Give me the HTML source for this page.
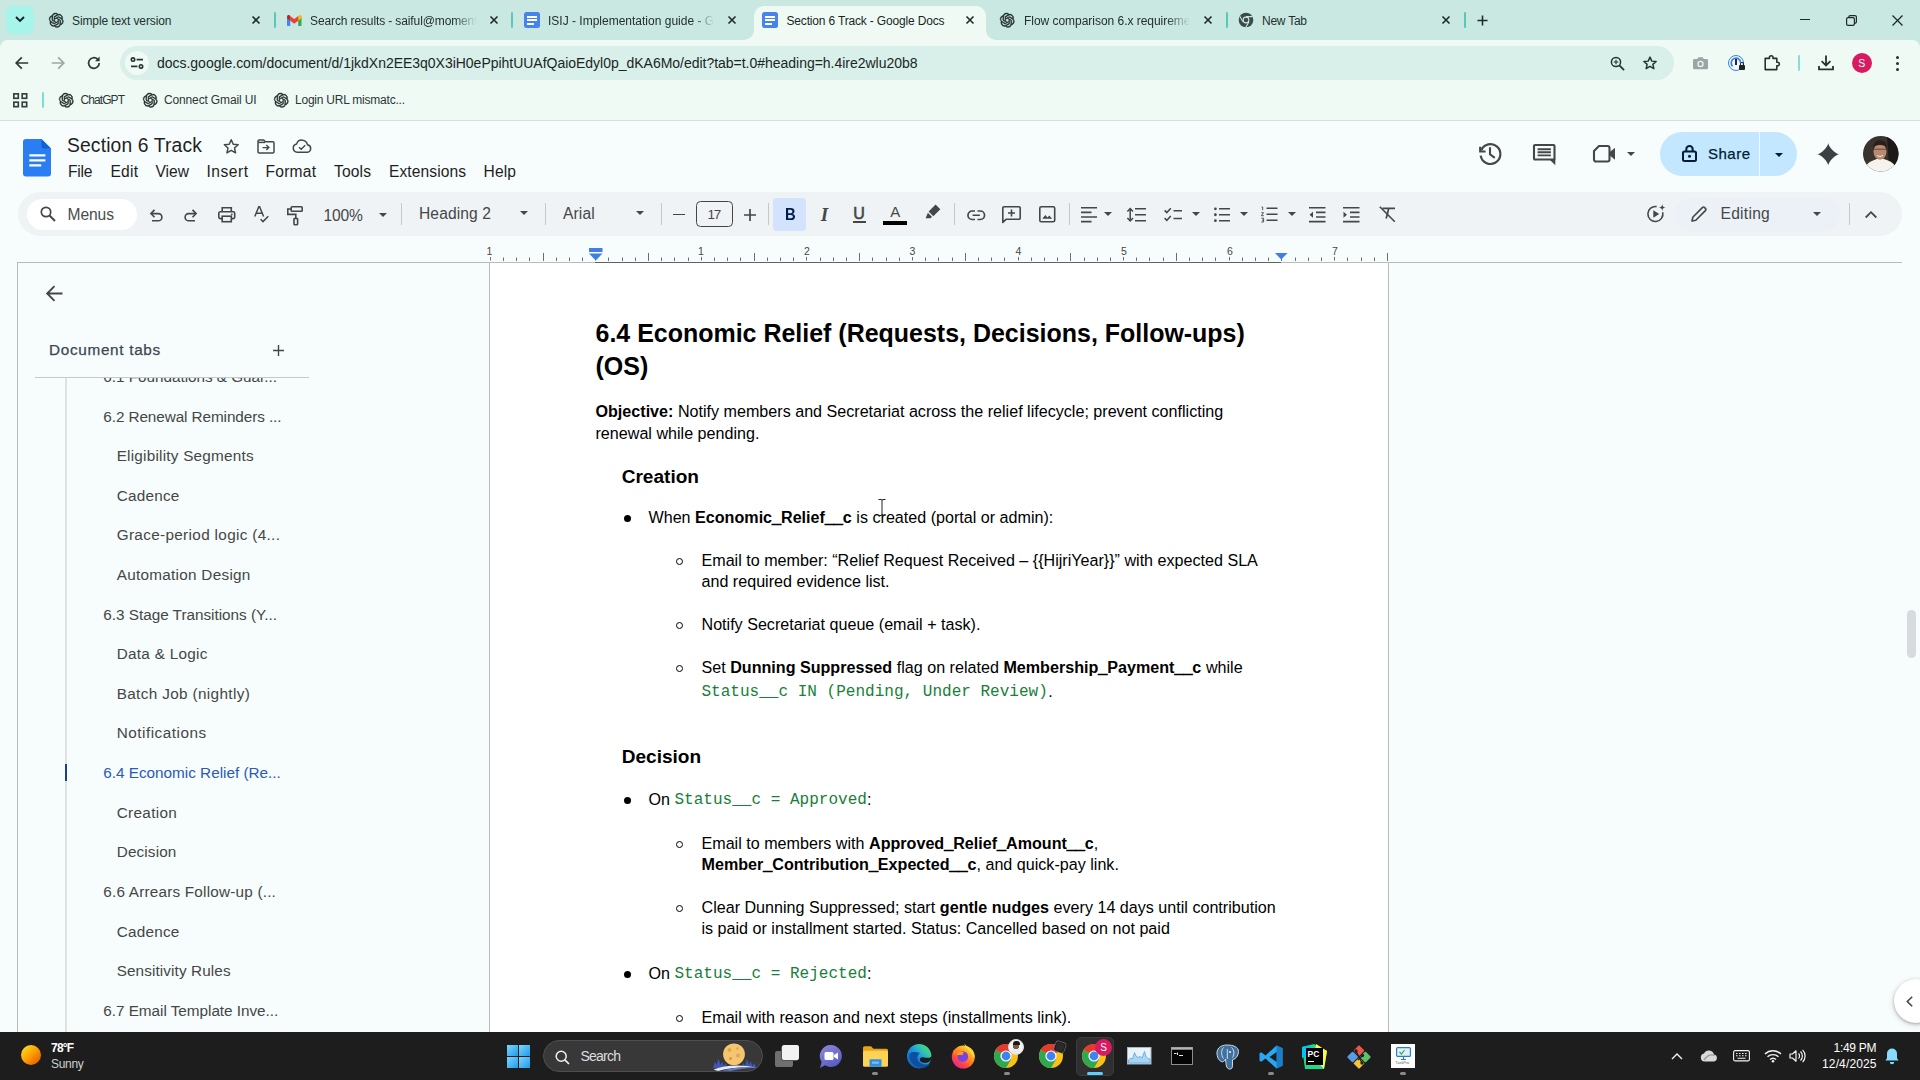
<!DOCTYPE html>
<html lang="en"><head><meta charset="utf-8"><title>Section 6 Track - Google Docs</title>
<style>
*{box-sizing:border-box;margin:0;padding:0}
html,body{width:1920px;height:1080px;overflow:hidden;background:#f7fcfc;font-family:"Liberation Sans",sans-serif}
.t{position:absolute;white-space:pre;}
.a{position:absolute}
svg{position:absolute;overflow:visible}
</style></head>
<body>
<div class="a" style="left:0;top:0;width:1920px;height:50px;background:#c9e8e2"></div>
<div class="a" style="left:0;top:40px;width:1920px;height:80px;background:#f0faf5;border-radius:8px 8px 0 0"></div>
<div class="a" style="left:0;top:120px;width:1920px;height:1px;background:#d3e2de"></div>
<div class="a" style="left:6px;top:6px;width:28px;height:28px;border-radius:8px;background:#a7f4ea"></div>
<svg style="left:15px;top:16px" width="10" height="7" viewBox="0 0 10 7"><path d="M1 1l4 4 4-4" stroke="#10201d" stroke-width="1.8" fill="none"/></svg>
<div class="a" style="left:754px;top:6px;width:232px;height:34px;background:#f0faf5;border-radius:10px 10px 0 0"></div>
<svg style="left:744px;top:30px" width="10" height="10" viewBox="0 0 10 10"><path d="M10 0V10H0A10 10 0 0 0 10 0z" fill="#f0faf5"/></svg>
<svg style="left:986px;top:30px" width="10" height="10" viewBox="0 0 10 10"><path d="M0 0V10H10A10 10 0 0 1 0 0z" fill="#f0faf5"/></svg>
<svg style="left:48.75px;top:12.75px" width="14.5" height="14.5" viewBox="0 0 24 24"><path fill="#1f2a28" stroke="#1f2a28" stroke-width="0.700" d="M22.2819 9.8211a5.9847 5.9847 0 0 0-.5157-4.9108 6.0462 6.0462 0 0 0-6.5098-2.9A6.0651 6.0651 0 0 0 4.9807 4.1818a5.9847 5.9847 0 0 0-3.9977 2.9 6.0462 6.0462 0 0 0 .7427 7.0966 5.98 5.98 0 0 0 .511 4.9107 6.051 6.051 0 0 0 6.5146 2.9001A5.9847 5.9847 0 0 0 13.2599 24a6.0557 6.0557 0 0 0 5.7718-4.2058 5.9894 5.9894 0 0 0 3.9977-2.9001 6.0557 6.0557 0 0 0-.7475-7.0729zm-9.022 12.6081a4.4755 4.4755 0 0 1-2.8764-1.0408l.1419-.0804 4.7783-2.7582a.7948.7948 0 0 0 .3927-.6813v-6.7369l2.02 1.1686a.071.071 0 0 1 .038.052v5.5826a4.504 4.504 0 0 1-4.4945 4.4944zm-9.6607-4.1254a4.4708 4.4708 0 0 1-.5346-3.0137l.142.0852 4.783 2.7582a.7712.7712 0 0 0 .7806 0l5.8428-3.3685v2.3324a.0804.0804 0 0 1-.0332.0615L9.74 19.9502a4.4992 4.4992 0 0 1-6.1408-1.6464zM2.3408 7.8956a4.485 4.485 0 0 1 2.3655-1.9728V11.6a.7664.7664 0 0 0 .3879.6765l5.8144 3.3543-2.0201 1.1685a.0757.0757 0 0 1-.071 0l-4.8303-2.7865A4.504 4.504 0 0 1 2.3408 7.872zm16.5963 3.8558L13.1038 8.364 15.1192 7.2a.0757.0757 0 0 1 .071 0l4.8303 2.7913a4.4944 4.4944 0 0 1-.6765 8.1042v-5.6772a.79.79 0 0 0-.407-.667zm2.0107-3.0231l-.142-.0852-4.7735-2.7818a.7759.7759 0 0 0-.7854 0L9.409 9.2297V6.8974a.0662.0662 0 0 1 .0284-.0615l4.8303-2.7866a4.4992 4.4992 0 0 1 6.6802 4.66zM8.3065 12.863l-2.02-1.1638a.0804.0804 0 0 1-.038-.0567V6.0742a4.4992 4.4992 0 0 1 7.3757-3.4537l-.142.0805L8.704 5.459a.7948.7948 0 0 0-.3927.6813zm1.0976-2.3654l2.602-1.4998 2.6069 1.4998v2.9994l-2.5974 1.4997-2.6067-1.4997Z"/></svg>
<span class="t" style="left:72.00px;top:13.24px;font-size:12px;line-height:16px;color:#23302e;letter-spacing:-0.104px;">Simple text version</span>
<svg style="left:286.8px;top:14.7px" width="14.5" height="10.9" viewBox="0 0 16 12">
<path d="M0 1.6V11a1 1 0 0 0 1 1h2.6V4.6z" fill="#4285f4"/><path d="M16 1.6V11a1 1 0 0 1-1 1h-2.6V4.6z" fill="#34a853"/>
<path d="M12.4 1.2v5.2L16 3.7V1.6C16 .1 14.3-.6 13.2.3z" fill="#fbbc04"/>
<path d="M3.6 6.4V1.2L8 4.5l4.4-3.3v5.2L8 9.7z" fill="#ea4335"/>
<path d="M0 1.6v2.1l3.6 2.7V1.2L2.8.3C1.7-.6 0 .1 0 1.6z" fill="#c5221f"/></svg>
<span class="t" style="left:310.00px;top:13.24px;font-size:12px;line-height:16px;color:#23302e;letter-spacing:-0.117px;-webkit-mask-image:linear-gradient(90deg,#000 86%,transparent 100%);">Search results - saiful@moment</span>
<div class="a" style="left:523.8px;top:12px;width:16px;height:16px;border-radius:2.5px;background:#4683ea"></div><div class="a" style="left:526.8px;top:15.5px;width:10px;height:2px;background:#fff"></div><div class="a" style="left:526.8px;top:19px;width:10px;height:2px;background:#fff"></div><div class="a" style="left:526.8px;top:22.5px;width:7px;height:2px;background:#fff"></div>
<span class="t" style="left:548.00px;top:13.24px;font-size:12px;line-height:16px;color:#23302e;-webkit-mask-image:linear-gradient(90deg,#000 88%,transparent 100%);">ISIJ - Implementation guide - G</span>
<div class="a" style="left:762px;top:12px;width:16px;height:16px;border-radius:2.5px;background:#4683ea"></div><div class="a" style="left:765px;top:15.5px;width:10px;height:2px;background:#fff"></div><div class="a" style="left:765px;top:19px;width:10px;height:2px;background:#fff"></div><div class="a" style="left:765px;top:22.5px;width:7px;height:2px;background:#fff"></div>
<span class="t" style="left:786.50px;top:13.24px;font-size:12px;line-height:16px;color:#1b2624;letter-spacing:-0.169px;">Section 6 Track - Google Docs</span>
<svg style="left:1000.25px;top:12.75px" width="14.5" height="14.5" viewBox="0 0 24 24"><path fill="#1f2a28" stroke="#1f2a28" stroke-width="0.700" d="M22.2819 9.8211a5.9847 5.9847 0 0 0-.5157-4.9108 6.0462 6.0462 0 0 0-6.5098-2.9A6.0651 6.0651 0 0 0 4.9807 4.1818a5.9847 5.9847 0 0 0-3.9977 2.9 6.0462 6.0462 0 0 0 .7427 7.0966 5.98 5.98 0 0 0 .511 4.9107 6.051 6.051 0 0 0 6.5146 2.9001A5.9847 5.9847 0 0 0 13.2599 24a6.0557 6.0557 0 0 0 5.7718-4.2058 5.9894 5.9894 0 0 0 3.9977-2.9001 6.0557 6.0557 0 0 0-.7475-7.0729zm-9.022 12.6081a4.4755 4.4755 0 0 1-2.8764-1.0408l.1419-.0804 4.7783-2.7582a.7948.7948 0 0 0 .3927-.6813v-6.7369l2.02 1.1686a.071.071 0 0 1 .038.052v5.5826a4.504 4.504 0 0 1-4.4945 4.4944zm-9.6607-4.1254a4.4708 4.4708 0 0 1-.5346-3.0137l.142.0852 4.783 2.7582a.7712.7712 0 0 0 .7806 0l5.8428-3.3685v2.3324a.0804.0804 0 0 1-.0332.0615L9.74 19.9502a4.4992 4.4992 0 0 1-6.1408-1.6464zM2.3408 7.8956a4.485 4.485 0 0 1 2.3655-1.9728V11.6a.7664.7664 0 0 0 .3879.6765l5.8144 3.3543-2.0201 1.1685a.0757.0757 0 0 1-.071 0l-4.8303-2.7865A4.504 4.504 0 0 1 2.3408 7.872zm16.5963 3.8558L13.1038 8.364 15.1192 7.2a.0757.0757 0 0 1 .071 0l4.8303 2.7913a4.4944 4.4944 0 0 1-.6765 8.1042v-5.6772a.79.79 0 0 0-.407-.667zm2.0107-3.0231l-.142-.0852-4.7735-2.7818a.7759.7759 0 0 0-.7854 0L9.409 9.2297V6.8974a.0662.0662 0 0 1 .0284-.0615l4.8303-2.7866a4.4992 4.4992 0 0 1 6.6802 4.66zM8.3065 12.863l-2.02-1.1638a.0804.0804 0 0 1-.038-.0567V6.0742a4.4992 4.4992 0 0 1 7.3757-3.4537l-.142.0805L8.704 5.459a.7948.7948 0 0 0-.3927.6813zm1.0976-2.3654l2.602-1.4998 2.6069 1.4998v2.9994l-2.5974 1.4997-2.6067-1.4997Z"/></svg>
<span class="t" style="left:1024.00px;top:13.24px;font-size:12px;line-height:16px;color:#23302e;letter-spacing:-0.032px;-webkit-mask-image:linear-gradient(90deg,#000 86%,transparent 100%);">Flow comparison 6.x requireme</span>
<svg style="left:1237.5px;top:12px" width="16" height="16" viewBox="0 0 16 16"><circle cx="8" cy="8" r="7.3" fill="#3c4a48"/><circle cx="8" cy="8" r="3.4" fill="#c9e8e2"/><circle cx="8" cy="8" r="2.3" fill="#3c4a48"/><path d="M8 4.6H14.6M5 9.7L1.8 4.2M11 9.7L7.8 15.2" stroke="#c9e8e2" stroke-width="1.1"/></svg>
<span class="t" style="left:1262.00px;top:13.24px;font-size:12px;line-height:16px;color:#23302e;letter-spacing:-0.245px;">New Tab</span>
<svg style="left:252px;top:16px" width="8" height="8" viewBox="0 0 8 8"><path d="M0.5 0.5L7.5 7.5M7.5 0.5L0.5 7.5" stroke="#1f2a28" stroke-width="1.6" fill="none"/></svg>
<svg style="left:490px;top:16px" width="8" height="8" viewBox="0 0 8 8"><path d="M0.5 0.5L7.5 7.5M7.5 0.5L0.5 7.5" stroke="#1f2a28" stroke-width="1.6" fill="none"/></svg>
<svg style="left:728px;top:16px" width="8" height="8" viewBox="0 0 8 8"><path d="M0.5 0.5L7.5 7.5M7.5 0.5L0.5 7.5" stroke="#1f2a28" stroke-width="1.6" fill="none"/></svg>
<svg style="left:966px;top:16px" width="8" height="8" viewBox="0 0 8 8"><path d="M0.5 0.5L7.5 7.5M7.5 0.5L0.5 7.5" stroke="#1f2a28" stroke-width="1.6" fill="none"/></svg>
<svg style="left:1204px;top:16px" width="8" height="8" viewBox="0 0 8 8"><path d="M0.5 0.5L7.5 7.5M7.5 0.5L0.5 7.5" stroke="#1f2a28" stroke-width="1.6" fill="none"/></svg>
<svg style="left:1442px;top:16px" width="8" height="8" viewBox="0 0 8 8"><path d="M0.5 0.5L7.5 7.5M7.5 0.5L0.5 7.5" stroke="#1f2a28" stroke-width="1.6" fill="none"/></svg>
<div class="a" style="left:274px;top:12px;width:2px;height:16px;background:#58c9b9;border-radius:1px"></div>
<div class="a" style="left:511px;top:12px;width:2px;height:16px;background:#58c9b9;border-radius:1px"></div>
<div class="a" style="left:1226px;top:12px;width:2px;height:16px;background:#58c9b9;border-radius:1px"></div>
<div class="a" style="left:1464px;top:12px;width:2px;height:16px;background:#58c9b9;border-radius:1px"></div>
<svg style="left:1476.500px;top:14.500px" width="11" height="11" viewBox="0 0 12 12"><path d="M6 0.5v11M0.5 6h11" stroke="#1f2a28" stroke-width="1.7"/></svg>
<div class="a" style="left:1800px;top:18.800px;width:10px;height:1.300px;background:#1f2a28"></div>
<svg style="left:1846px;top:15px" width="11" height="11" viewBox="0 0 11 11"><rect x="0.6" y="2.6" width="7.8" height="7.8" rx="1.4" fill="none" stroke="#1f2a28" stroke-width="1.2"/><path d="M2.8 2.4V2A1.4 1.4 0 0 1 4.2 0.6H9A1.4 1.4 0 0 1 10.4 2V6.8A1.4 1.4 0 0 1 9 8.2H8.6" fill="none" stroke="#1f2a28" stroke-width="1.2"/></svg>
<svg style="left:1891.5px;top:14.5px" width="11.0" height="11.0" viewBox="0 0 11.0 11.0"><path d="M0.5 0.5L10.5 10.5M10.5 0.5L0.5 10.5" stroke="#1f2a28" stroke-width="1.3" fill="none"/></svg>
<svg style="left:15px;top:56px" width="14" height="14" viewBox="0 0 14 14"><path d="M13.2 7H1.6M6.8 1.4L1.2 7l5.6 5.6" stroke="#2c3836" stroke-width="1.7" fill="none"/></svg>
<svg style="left:51px;top:56px" width="14" height="14" viewBox="0 0 14 14"><path d="M0.8 7H12.4M7.2 1.4L12.8 7 7.2 12.6" stroke="#9aa9a6" stroke-width="1.7" fill="none"/></svg>
<svg style="left:87px;top:56px" width="14" height="14" viewBox="0 0 14 14"><path d="M12.2 7A5.3 5.3 0 1 1 10.6 3.2" stroke="#2c3836" stroke-width="1.7" fill="none"/><path d="M12.6 0.6V5.2H8z" fill="#2c3836"/></svg>
<div class="a" style="left:120px;top:46px;width:1554px;height:34px;border-radius:17px;background:#d9efe9"></div>
<div class="a" style="left:125px;top:51px;width:24px;height:24px;border-radius:12px;background:#f0faf5"></div>
<svg style="left:130px;top:57px" width="14" height="12" viewBox="0 0 14 12"><circle cx="3" cy="2.6" r="1.7" fill="none" stroke="#243230" stroke-width="1.6"/><path d="M6.6 2.6H13" stroke="#243230" stroke-width="1.7"/><circle cx="11" cy="9.4" r="1.7" fill="none" stroke="#243230" stroke-width="1.6"/><path d="M1 9.4H7.4" stroke="#243230" stroke-width="1.7"/></svg>
<span class="t" style="left:157.00px;top:54.15px;font-size:14px;line-height:18px;color:#1b2624;letter-spacing:-0.021px;">docs.google.com/document/d/1jkdXn2EE3q0X3iH0ePpihtUUAfQaioEdyl0p_dKA6Mo/edit?tab=t.0#heading=h.4ire2wlu20b8</span>
<svg style="left:1610.300px;top:55.500px" width="15" height="15" viewBox="0 0 16 16"><circle cx="6.4" cy="6.4" r="4.9" fill="none" stroke="#243230" stroke-width="1.6"/><path d="M10 10l5 5" stroke="#243230" stroke-width="1.9"/><path d="M4 6.4h4.8M6.4 4v4.8" stroke="#243230" stroke-width="1.2"/></svg>
<svg style="left:1642px;top:55px" width="16" height="16" viewBox="0 0 24 24"><path d="M12 3.2l2.7 6 6.5.6-4.9 4.3 1.5 6.4L12 17.1l-5.8 3.4 1.5-6.4-4.9-4.3 6.5-.6z" fill="none" stroke="#243230" stroke-width="2.2" stroke-linejoin="round"/></svg>
<svg style="left:1692.500px;top:55.800px" width="15" height="13.500" viewBox="0 0 16 14"><path d="M1.500 3h3l1.200-2h4.600l1.200 2h3A1.500 1.500 0 0 1 16 4.500v8A1.500 1.500 0 0 1 14.500 14h-13A1.500 1.500 0 0 1 0 12.500v-8A1.500 1.500 0 0 1 1.500 3z" fill="#9ba5a3"/><circle cx="8" cy="8.300" r="3.400" fill="#eef4f2"/><circle cx="8" cy="8.300" r="2" fill="#9ba5a3"/></svg>
<div class="a" style="left:1727.500px;top:54.500px;width:16px;height:16px;border-radius:8px;border:1.400px solid #3c83e3;background:#f4f8fd"></div><svg style="left:1729.500px;top:56.500px" width="12" height="12" viewBox="0 0 12 12"><path d="M2.600 9.400A4.800 4.800 0 1 1 10.800 6" fill="none" stroke="#3c83e3" stroke-width="1.700"/></svg><div class="a" style="left:1734.600px;top:58.800px;width:2px;height:6.400px;background:#1f2937"></div><div class="a" style="left:1738.500px;top:65px;width:6.300px;height:5.300px;border-radius:1px;background:#1c2422"></div><div class="a" style="left:1739.700px;top:62.300px;width:3.900px;height:4px;border-radius:2px 2px 0 0;border:1px solid #1c2422;border-bottom:0"></div>
<svg style="left:1764px;top:54px" width="17" height="17" viewBox="0 0 17 17"><path d="M1.2 4.400h4.200v-.8a1.800 1.800 0 0 1 3.600 0v.8h3.800v3.800h.8a1.800 1.800 0 0 1 0 3.600h-.8v3.800H1.200z" fill="none" stroke="#243230" stroke-width="1.600" stroke-linejoin="round"/></svg>
<div class="a" style="left:1797.5px;top:55px;width:2px;height:16px;background:#84e0d6;border-radius:1px"></div>
<svg style="left:1818px;top:55px" width="16" height="16" viewBox="0 0 16 16"><path d="M8 0.500v9.500M3.600 6.200L8 10.400l4.400-4.200" stroke="#243230" stroke-width="1.800" fill="none"/><path d="M1 11v3.400h14V11" stroke="#243230" stroke-width="1.800" fill="none"/></svg>
<div class="a" style="left:1852px;top:53px;width:20px;height:20px;border-radius:10px;background:#d81b60"></div>
<span class="t" style="left:1858.30px;top:56.36px;font-size:10.5px;line-height:14px;color:#fff;">S</span>
<div class="a" style="left:1896px;top:55.5px;width:3px;height:3px;border-radius:2px;background:#243230"></div>
<div class="a" style="left:1896px;top:61.5px;width:3px;height:3px;border-radius:2px;background:#243230"></div>
<div class="a" style="left:1896px;top:67.5px;width:3px;height:3px;border-radius:2px;background:#243230"></div>
<svg style="left:12.800px;top:92.800px" width="14.500" height="14.500" viewBox="0 0 13 13"><g fill="none" stroke="#34403e" stroke-width="1.500"><rect x="0.750" y="0.750" width="4" height="4"/><rect x="8.250" y="0.750" width="4" height="4"/><rect x="0.750" y="8.250" width="4" height="4"/><rect x="8.250" y="8.250" width="4" height="4"/></g></svg>
<div class="a" style="left:42px;top:92px;width:2px;height:16px;background:#7adfd2;border-radius:1px"></div>
<svg style="left:58.75px;top:92.75px" width="14.5" height="14.5" viewBox="0 0 24 24"><path fill="#1f2a28" stroke="#1f2a28" stroke-width="0.700" d="M22.2819 9.8211a5.9847 5.9847 0 0 0-.5157-4.9108 6.0462 6.0462 0 0 0-6.5098-2.9A6.0651 6.0651 0 0 0 4.9807 4.1818a5.9847 5.9847 0 0 0-3.9977 2.9 6.0462 6.0462 0 0 0 .7427 7.0966 5.98 5.98 0 0 0 .511 4.9107 6.051 6.051 0 0 0 6.5146 2.9001A5.9847 5.9847 0 0 0 13.2599 24a6.0557 6.0557 0 0 0 5.7718-4.2058 5.9894 5.9894 0 0 0 3.9977-2.9001 6.0557 6.0557 0 0 0-.7475-7.0729zm-9.022 12.6081a4.4755 4.4755 0 0 1-2.8764-1.0408l.1419-.0804 4.7783-2.7582a.7948.7948 0 0 0 .3927-.6813v-6.7369l2.02 1.1686a.071.071 0 0 1 .038.052v5.5826a4.504 4.504 0 0 1-4.4945 4.4944zm-9.6607-4.1254a4.4708 4.4708 0 0 1-.5346-3.0137l.142.0852 4.783 2.7582a.7712.7712 0 0 0 .7806 0l5.8428-3.3685v2.3324a.0804.0804 0 0 1-.0332.0615L9.74 19.9502a4.4992 4.4992 0 0 1-6.1408-1.6464zM2.3408 7.8956a4.485 4.485 0 0 1 2.3655-1.9728V11.6a.7664.7664 0 0 0 .3879.6765l5.8144 3.3543-2.0201 1.1685a.0757.0757 0 0 1-.071 0l-4.8303-2.7865A4.504 4.504 0 0 1 2.3408 7.872zm16.5963 3.8558L13.1038 8.364 15.1192 7.2a.0757.0757 0 0 1 .071 0l4.8303 2.7913a4.4944 4.4944 0 0 1-.6765 8.1042v-5.6772a.79.79 0 0 0-.407-.667zm2.0107-3.0231l-.142-.0852-4.7735-2.7818a.7759.7759 0 0 0-.7854 0L9.409 9.2297V6.8974a.0662.0662 0 0 1 .0284-.0615l4.8303-2.7866a4.4992 4.4992 0 0 1 6.6802 4.66zM8.3065 12.863l-2.02-1.1638a.0804.0804 0 0 1-.038-.0567V6.0742a4.4992 4.4992 0 0 1 7.3757-3.4537l-.142.0805L8.704 5.459a.7948.7948 0 0 0-.3927.6813zm1.0976-2.3654l2.602-1.4998 2.6069 1.4998v2.9994l-2.5974 1.4997-2.6067-1.4997Z"/></svg>
<span class="t" style="left:80.50px;top:92.14px;font-size:12px;line-height:16px;color:#2b3735;letter-spacing:-0.919px;">ChatGPT</span>
<svg style="left:142.75px;top:92.75px" width="14.5" height="14.5" viewBox="0 0 24 24"><path fill="#1f2a28" stroke="#1f2a28" stroke-width="0.700" d="M22.2819 9.8211a5.9847 5.9847 0 0 0-.5157-4.9108 6.0462 6.0462 0 0 0-6.5098-2.9A6.0651 6.0651 0 0 0 4.9807 4.1818a5.9847 5.9847 0 0 0-3.9977 2.9 6.0462 6.0462 0 0 0 .7427 7.0966 5.98 5.98 0 0 0 .511 4.9107 6.051 6.051 0 0 0 6.5146 2.9001A5.9847 5.9847 0 0 0 13.2599 24a6.0557 6.0557 0 0 0 5.7718-4.2058 5.9894 5.9894 0 0 0 3.9977-2.9001 6.0557 6.0557 0 0 0-.7475-7.0729zm-9.022 12.6081a4.4755 4.4755 0 0 1-2.8764-1.0408l.1419-.0804 4.7783-2.7582a.7948.7948 0 0 0 .3927-.6813v-6.7369l2.02 1.1686a.071.071 0 0 1 .038.052v5.5826a4.504 4.504 0 0 1-4.4945 4.4944zm-9.6607-4.1254a4.4708 4.4708 0 0 1-.5346-3.0137l.142.0852 4.783 2.7582a.7712.7712 0 0 0 .7806 0l5.8428-3.3685v2.3324a.0804.0804 0 0 1-.0332.0615L9.74 19.9502a4.4992 4.4992 0 0 1-6.1408-1.6464zM2.3408 7.8956a4.485 4.485 0 0 1 2.3655-1.9728V11.6a.7664.7664 0 0 0 .3879.6765l5.8144 3.3543-2.0201 1.1685a.0757.0757 0 0 1-.071 0l-4.8303-2.7865A4.504 4.504 0 0 1 2.3408 7.872zm16.5963 3.8558L13.1038 8.364 15.1192 7.2a.0757.0757 0 0 1 .071 0l4.8303 2.7913a4.4944 4.4944 0 0 1-.6765 8.1042v-5.6772a.79.79 0 0 0-.407-.667zm2.0107-3.0231l-.142-.0852-4.7735-2.7818a.7759.7759 0 0 0-.7854 0L9.409 9.2297V6.8974a.0662.0662 0 0 1 .0284-.0615l4.8303-2.7866a4.4992 4.4992 0 0 1 6.6802 4.66zM8.3065 12.863l-2.02-1.1638a.0804.0804 0 0 1-.038-.0567V6.0742a4.4992 4.4992 0 0 1 7.3757-3.4537l-.142.0805L8.704 5.459a.7948.7948 0 0 0-.3927.6813zm1.0976-2.3654l2.602-1.4998 2.6069 1.4998v2.9994l-2.5974 1.4997-2.6067-1.4997Z"/></svg>
<span class="t" style="left:164.00px;top:92.14px;font-size:12px;line-height:16px;color:#2b3735;letter-spacing:-0.147px;">Connect Gmail UI</span>
<svg style="left:273.75px;top:92.75px" width="14.5" height="14.5" viewBox="0 0 24 24"><path fill="#1f2a28" stroke="#1f2a28" stroke-width="0.700" d="M22.2819 9.8211a5.9847 5.9847 0 0 0-.5157-4.9108 6.0462 6.0462 0 0 0-6.5098-2.9A6.0651 6.0651 0 0 0 4.9807 4.1818a5.9847 5.9847 0 0 0-3.9977 2.9 6.0462 6.0462 0 0 0 .7427 7.0966 5.98 5.98 0 0 0 .511 4.9107 6.051 6.051 0 0 0 6.5146 2.9001A5.9847 5.9847 0 0 0 13.2599 24a6.0557 6.0557 0 0 0 5.7718-4.2058 5.9894 5.9894 0 0 0 3.9977-2.9001 6.0557 6.0557 0 0 0-.7475-7.0729zm-9.022 12.6081a4.4755 4.4755 0 0 1-2.8764-1.0408l.1419-.0804 4.7783-2.7582a.7948.7948 0 0 0 .3927-.6813v-6.7369l2.02 1.1686a.071.071 0 0 1 .038.052v5.5826a4.504 4.504 0 0 1-4.4945 4.4944zm-9.6607-4.1254a4.4708 4.4708 0 0 1-.5346-3.0137l.142.0852 4.783 2.7582a.7712.7712 0 0 0 .7806 0l5.8428-3.3685v2.3324a.0804.0804 0 0 1-.0332.0615L9.74 19.9502a4.4992 4.4992 0 0 1-6.1408-1.6464zM2.3408 7.8956a4.485 4.485 0 0 1 2.3655-1.9728V11.6a.7664.7664 0 0 0 .3879.6765l5.8144 3.3543-2.0201 1.1685a.0757.0757 0 0 1-.071 0l-4.8303-2.7865A4.504 4.504 0 0 1 2.3408 7.872zm16.5963 3.8558L13.1038 8.364 15.1192 7.2a.0757.0757 0 0 1 .071 0l4.8303 2.7913a4.4944 4.4944 0 0 1-.6765 8.1042v-5.6772a.79.79 0 0 0-.407-.667zm2.0107-3.0231l-.142-.0852-4.7735-2.7818a.7759.7759 0 0 0-.7854 0L9.409 9.2297V6.8974a.0662.0662 0 0 1 .0284-.0615l4.8303-2.7866a4.4992 4.4992 0 0 1 6.6802 4.66zM8.3065 12.863l-2.02-1.1638a.0804.0804 0 0 1-.038-.0567V6.0742a4.4992 4.4992 0 0 1 7.3757-3.4537l-.142.0805L8.704 5.459a.7948.7948 0 0 0-.3927.6813zm1.0976-2.3654l2.602-1.4998 2.6069 1.4998v2.9994l-2.5974 1.4997-2.6067-1.4997Z"/></svg>
<span class="t" style="left:295.00px;top:92.14px;font-size:12px;line-height:16px;color:#2b3735;letter-spacing:-0.224px;">Login URL mismatc...</span>
<svg style="left:23px;top:138.5px" width="28" height="37.5" viewBox="0 0 28 37.5"><path d="M3 0H18.500L28 9.500V34.500A3 3 0 0 1 25 37.500H3A3 3 0 0 1 0 34.500V3A3 3 0 0 1 3 0z" fill="#2a7df2"/><path d="M18.500 0L28 9.500H20.500A2 2 0 0 1 18.500 7.500z" fill="#0f62d6"/><path d="M6.300 15.200H22.400v2.300H6.300zM6.300 20.200H22.400v2.300H6.300zM6.300 25.200H18.200v2.300H6.300z" fill="#fff"/></svg>
<span class="t" style="left:67.00px;top:133.11px;font-size:19.3px;line-height:25px;color:#1f1f1f;letter-spacing:0.142px;">Section 6 Track</span>
<svg style="left:221.7px;top:137.3px" width="18.5" height="18.5" viewBox="0 0 24 24"><path d="M12 3.500l2.600 5.900 6.400.6-4.800 4.300 1.400 6.300L12 17.300l-5.600 3.300 1.400-6.300L3 10l6.400-.6z" fill="none" stroke="#444746" stroke-width="1.900" stroke-linejoin="round"/></svg>
<svg style="left:257px;top:139.3px" width="18" height="15" viewBox="0 0 18 15"><path d="M1 2.200A1.200 1.200 0 0 1 2.200 1H6.600L8.400 2.800H15.800A1.200 1.200 0 0 1 17 4V12.800A1.200 1.200 0 0 1 15.800 14H2.200A1.200 1.200 0 0 1 1 12.800z" fill="none" stroke="#444746" stroke-width="1.500"/><path d="M1 3.400H8" stroke="#444746" stroke-width="1.500"/><path d="M5.500 8.600H11.500M9.300 6.100L11.900 8.600 9.300 11.100" fill="none" stroke="#444746" stroke-width="1.400"/></svg>
<svg style="left:292.3px;top:139px" width="20" height="14" viewBox="0 0 20 14"><path d="M5.200 13.200A4.200 4.200 0 0 1 4.600 4.900 5.600 5.600 0 0 1 15.400 5.700 3.800 3.800 0 0 1 15.600 13.200z" fill="none" stroke="#444746" stroke-width="1.500" stroke-linejoin="round"/><path d="M7 8.200L9.200 10.300 13.200 6.300" fill="none" stroke="#444746" stroke-width="1.400"/></svg>
<span class="t" style="left:68.00px;top:161.59px;font-size:15.6px;line-height:20px;color:#1f1f1f;letter-spacing:-0.212px;">File</span>
<span class="t" style="left:110.50px;top:161.59px;font-size:15.6px;line-height:20px;color:#1f1f1f;letter-spacing:0.206px;">Edit</span>
<span class="t" style="left:155.50px;top:161.59px;font-size:15.6px;line-height:20px;color:#1f1f1f;letter-spacing:-0.010px;">View</span>
<span class="t" style="left:206.50px;top:161.59px;font-size:15.6px;line-height:20px;color:#1f1f1f;letter-spacing:0.497px;">Insert</span>
<span class="t" style="left:265.50px;top:161.59px;font-size:15.6px;line-height:20px;color:#1f1f1f;letter-spacing:0.219px;">Format</span>
<span class="t" style="left:334.00px;top:161.59px;font-size:15.6px;line-height:20px;color:#1f1f1f;letter-spacing:0.145px;">Tools</span>
<span class="t" style="left:389.00px;top:161.59px;font-size:15.6px;line-height:20px;color:#1f1f1f;letter-spacing:0.077px;">Extensions</span>
<span class="t" style="left:483.50px;top:161.59px;font-size:15.6px;line-height:20px;color:#1f1f1f;letter-spacing:0.139px;">Help</span>
<svg style="left:1478.9px;top:142.9px" width="23" height="22" viewBox="0 0 23 22"><path d="M2.300 7.300A9.900 9.900 0 1 1 1.700 12.600" fill="none" stroke="#444746" stroke-width="2.200"/><path d="M1.200 3.800V8.500H6.600" fill="none" stroke="#444746" stroke-width="2.200"/><path d="M11 4.300V11.300L15.800 14.800" fill="none" stroke="#444746" stroke-width="2.100"/></svg>
<svg style="left:1533px;top:144px" width="22.5" height="21.5" viewBox="0 0 22.500 21.500"><path d="M2 1H20.500A1 1 0 0 1 21.500 2V15.500H2A1 1 0 0 1 1 14.500V2A1 1 0 0 1 2 1z" fill="none" stroke="#444746" stroke-width="2.100" stroke-linejoin="round"/><path d="M16.500 15.500H22.300V21.300z" fill="#444746"/><path d="M4.600 5.200H17.900M4.600 8.300H17.900M4.600 11.400H17.900" stroke="#444746" stroke-width="1.900"/></svg>
<svg style="left:1592.5px;top:145.3px" width="23" height="17.5" viewBox="0 0 23 17.500"><path d="M6 1H14.500A2 2 0 0 1 16.500 3V14.500A2 2 0 0 1 14.500 16.500H3A2 2 0 0 1 1 14.500V6z" fill="none" stroke="#444746" stroke-width="2.100" stroke-linejoin="round"/><path d="M16.500 7.300L22 2.800V14.700L16.500 10.200z" fill="#444746"/></svg>
<svg style="left:1627.0px;top:152.0px" width="8" height="4" viewBox="0 0 8 4"><path d="M0 0H8L4.0 4z" fill="#444746"/></svg>
<div class="a" style="left:1660px;top:132px;width:137px;height:44px;border-radius:22px;background:#c2e7ff"></div>
<div class="a" style="left:1759px;top:132px;width:1px;height:44px;background:#eef8ff"></div>
<svg style="left:1681.5px;top:144.5px" width="15" height="17" viewBox="0 0 15 17"><rect x="1" y="6.500" width="13" height="9.500" rx="1.500" fill="none" stroke="#001d35" stroke-width="2"/><path d="M4.300 6.500V4.200A3.200 3.200 0 0 1 10.700 4.200V6.500" fill="none" stroke="#001d35" stroke-width="2"/><circle cx="7.500" cy="11.300" r="1.500" fill="#001d35"/></svg>
<span class="t" style="left:1708.00px;top:143.60px;font-size:15px;line-height:20px;color:#001d35;letter-spacing:0.493px;-webkit-text-stroke:0.250px #001d35;">Share</span>
<svg style="left:1774.5px;top:152.5px" width="8" height="4" viewBox="0 0 8 4"><path d="M0 0H8L4.0 4z" fill="#001d35"/></svg>
<svg style="left:1816.9px;top:143px" width="22.5" height="22.5" viewBox="0 0 24 24"><path d="M12 0C12 4 20 12 24 12 20 12 12 20 12 24 12 20 4 12 0 12 4 12 12 4 12 0z" fill="#3c4043"/></svg>
<svg style="left:1862.800px;top:135.800px" width="35.500" height="35.500" viewBox="0 0 35.500 35.500"><clipPath id="avc"><circle cx="17.750" cy="17.750" r="17.750"/></clipPath><g clip-path="url(#avc)"><rect width="36" height="36" fill="#3a3431"/><path d="M24 0H36V30H26z" fill="#1d1917"/><ellipse cx="17.500" cy="36" rx="16.500" ry="13" fill="#f6f3ee"/><path d="M12 24L17 21 22.500 24 20 28H14z" fill="#f6f3ee"/><ellipse cx="17" cy="15.500" rx="6.500" ry="8.200" fill="#b98a70"/><path d="M10.300 13C9.800 7.500 13 4.300 17 4.300 21.500 4.300 24.200 7.500 23.600 13 22.500 9.800 20.500 9 17 9 13.500 9 11.500 9.800 10.300 13z" fill="#2a1f1a"/><path d="M11 13.200H23" stroke="#5a4034" stroke-width="0.900"/><path d="M14 19.500Q17 21.500 20 19.500" stroke="#f1e6e0" stroke-width="1" fill="none"/></g></svg>
<div class="a" style="left:18px;top:192px;width:1884px;height:44px;border-radius:22px;background:#eff3f6"></div>
<div class="a" style="left:27px;top:199px;width:110px;height:31px;border-radius:15.500px;background:#fff"></div>
<svg style="left:40px;top:205.8px" width="16" height="16" viewBox="0 0 16 16"><circle cx="6" cy="6" r="4.700" fill="none" stroke="#444746" stroke-width="1.700"/><path d="M9.500 9.500L15 15" stroke="#444746" stroke-width="1.900"/></svg>
<span class="t" style="left:67.50px;top:204.59px;font-size:15.6px;line-height:20px;color:#4a4d4f;letter-spacing:-0.081px;">Menus</span>
<svg style="left:149.5px;top:208.8px" width="13" height="12.5" viewBox="0 0 13 12.500"><path d="M1 4.600H8.300A3.600 3.600 0 0 1 8.300 11.800H2" fill="none" stroke="#444746" stroke-width="1.600"/><path d="M4.500 0.900L0.900 4.600 4.500 8.300" fill="none" stroke="#444746" stroke-width="1.600"/></svg>
<svg style="left:183.5px;top:208.8px" width="13" height="12.5" viewBox="0 0 13 12.500"><path d="M12 4.600H4.700A3.600 3.600 0 0 0 4.700 11.800H11" fill="none" stroke="#444746" stroke-width="1.600"/><path d="M8.500 0.900L12.100 4.600 8.500 8.300" fill="none" stroke="#444746" stroke-width="1.600"/></svg>
<svg style="left:217.5px;top:207px" width="17.5" height="15.5" viewBox="0 0 17.500 15.500"><path d="M4.200 4.800V0.800H13.300V4.800" fill="none" stroke="#444746" stroke-width="1.600"/><path d="M4.200 11.600H2.300A1.500 1.500 0 0 1 0.800 10.100V6.300A1.500 1.500 0 0 1 2.300 4.800H15.200A1.500 1.500 0 0 1 16.700 6.300V10.100A1.500 1.500 0 0 1 15.200 11.600H13.300" fill="none" stroke="#444746" stroke-width="1.600"/><rect x="4.200" y="9.200" width="9.100" height="5.500" fill="none" stroke="#444746" stroke-width="1.600"/><circle cx="13.800" cy="7.300" r="0.900" fill="#444746"/></svg>
<svg style="left:253.5px;top:205.5px" width="15" height="17" viewBox="0 0 15 17"><path d="M0.800 10.500L4.800 0.800H5.600L9.600 10.500M2.200 7.200H8.200" fill="none" stroke="#444746" stroke-width="1.500"/><path d="M6.600 13.200L9 15.600 14.300 10.300" fill="none" stroke="#444746" stroke-width="1.500"/></svg>
<svg style="left:287px;top:205.5px" width="16" height="19.5" viewBox="0 0 16 19.500"><rect x="4.200" y="0.800" width="11" height="4.400" rx="0.800" fill="none" stroke="#444746" stroke-width="1.600"/><path d="M4.200 3H0.800V8.400H8.800V12.500" fill="none" stroke="#444746" stroke-width="1.600"/><rect x="7" y="12.500" width="3.600" height="6.200" rx="0.600" fill="none" stroke="#444746" stroke-width="1.600"/></svg>
<span class="t" style="left:323.50px;top:205.59px;font-size:15.6px;line-height:20px;color:#444746;letter-spacing:-0.133px;">100%</span>
<svg style="left:378.5px;top:212.5px" width="8" height="4" viewBox="0 0 8 4"><path d="M0 0H8L4.0 4z" fill="#444746"/></svg>
<div class="a" style="left:401.0px;top:203px;width:1px;height:22px;background:#c7c7c7"></div>
<span class="t" style="left:419.00px;top:203.59px;font-size:15.6px;line-height:20px;color:#444746;letter-spacing:0.110px;">Heading 2</span>
<svg style="left:520.0px;top:211.0px" width="8" height="4" viewBox="0 0 8 4"><path d="M0 0H8L4.0 4z" fill="#444746"/></svg>
<div class="a" style="left:545.0px;top:203px;width:1px;height:22px;background:#c7c7c7"></div>
<span class="t" style="left:563.00px;top:203.59px;font-size:15.6px;line-height:20px;color:#444746;letter-spacing:0.123px;">Arial</span>
<svg style="left:636.0px;top:211.0px" width="8" height="4" viewBox="0 0 8 4"><path d="M0 0H8L4.0 4z" fill="#444746"/></svg>
<div class="a" style="left:661.0px;top:203px;width:1px;height:22px;background:#c7c7c7"></div>
<div class="a" style="left:673px;top:213.700px;width:12px;height:1.700px;background:#444746"></div>
<div class="a" style="left:696px;top:201px;width:37px;height:26px;border:1px solid #444746;border-radius:4.500px"></div>
<span class="t" style="left:707.50px;top:205.82px;font-size:13.5px;line-height:18px;color:#444746;letter-spacing:-1.316px;">17</span>
<svg style="left:744px;top:208.5px" width="12" height="12" viewBox="0 0 12 12"><path d="M6 0V12M0 6H12" stroke="#444746" stroke-width="1.700"/></svg>
<div class="a" style="left:768.0px;top:203px;width:1px;height:22px;background:#c7c7c7"></div>
<div class="a" style="left:773px;top:198px;width:33px;height:33px;border-radius:4px;background:#d3e3fd"></div>
<span class="t" style="left:784.90px;top:204.08px;font-size:16.5px;line-height:21px;color:#041e49;font-weight:700;transform:scaleX(.9);transform-origin:0 0;">B</span>
<span class="t" style="left:820.80px;top:204.28px;font-size:16.5px;line-height:21px;color:#444746;font-weight:700;font-style:italic;font-family:'Liberation Serif',serif;font-size:19px;">I</span>
<span class="t" style="left:853.20px;top:202.66px;font-size:16px;line-height:21px;color:#444746;-webkit-text-stroke:0.600px #444746;">U</span>
<div class="a" style="left:852.500px;top:221.300px;width:13px;height:1.500px;background:#444746"></div>
<span class="t" style="left:890.30px;top:202.30px;font-size:15px;line-height:20px;color:#444746;">A</span>
<div class="a" style="left:883px;top:221.300px;width:24px;height:3.800px;background:#000"></div>
<svg style="left:925px;top:203.5px" width="16" height="15" viewBox="0 0 16 15"><path d="M10.600 0.500L15.300 5.200 8.300 12.200 3.600 7.500z" fill="#444746"/><path d="M2.900 8.700L7.100 12.900 5.300 14.200H0.600z" fill="#444746"/></svg>
<div class="a" style="left:954.0px;top:203px;width:1px;height:22px;background:#c7c7c7"></div>
<svg style="left:966.5px;top:209.5px" width="18.5" height="10.5" viewBox="0 0 18.500 10.500"><path d="M8 1H5.200A4.250 4.250 0 0 0 5.200 9.500H8M10.500 1H13.300A4.250 4.250 0 0 1 13.300 9.500H10.500M5.600 5.250H12.900" fill="none" stroke="#444746" stroke-width="1.700"/></svg>
<svg style="left:1002px;top:205.5px" width="19" height="17" viewBox="0 0 19 17"><path d="M2 0.800H17A1.200 1.200 0 0 1 18.200 2V12A1.200 1.200 0 0 1 17 13.200H4.300L0.800 16.400V2A1.200 1.200 0 0 1 2 0.800z" fill="none" stroke="#444746" stroke-width="1.600" stroke-linejoin="round"/><path d="M9.500 3.500V10.500M6 7H13" stroke="#444746" stroke-width="1.600"/></svg>
<svg style="left:1038.5px;top:206px" width="16.5" height="16.5" viewBox="0 0 16.500 16.500"><rect x="0.800" y="0.800" width="14.900" height="14.900" rx="1.500" fill="none" stroke="#444746" stroke-width="1.600"/><path d="M3.300 12.700L6.300 8.900 8.500 11.500 10.300 9.500 13.200 12.700z" fill="#444746"/></svg>
<div class="a" style="left:1069.0px;top:203px;width:1px;height:22px;background:#c7c7c7"></div>
<svg style="left:1080.5px;top:206.5px" width="16" height="15.5" viewBox="0 0 16 15.500"><path d="M0 0.800H16M0 5.400H10.500M0 10H16M0 14.600H10.500" stroke="#444746" stroke-width="1.600"/></svg>
<svg style="left:1104.0px;top:212.0px" width="8" height="4" viewBox="0 0 8 4"><path d="M0 0H8L4.0 4z" fill="#444746"/></svg>
<svg style="left:1126.5px;top:206.5px" width="19" height="15.5" viewBox="0 0 19 15.500"><path d="M8 1.800H19M8 7.750H19M8 13.700H19" stroke="#444746" stroke-width="1.600"/><path d="M3.200 1.800V13.700M0.400 4.600L3.200 1.600 6 4.600M0.400 10.900L3.200 13.900 6 10.900" fill="none" stroke="#444746" stroke-width="1.500"/></svg>
<svg style="left:1164px;top:206.5px" width="18" height="15.5" viewBox="0 0 18 15.500"><path d="M9.500 3.800H18M9.500 11.500H18" stroke="#444746" stroke-width="1.600"/><path d="M0.600 3.400L2.800 5.600 6.800 1.200M0.600 11.100L2.800 13.300 6.800 8.900" fill="none" stroke="#444746" stroke-width="1.500"/></svg>
<svg style="left:1192.0px;top:212.0px" width="8" height="4" viewBox="0 0 8 4"><path d="M0 0H8L4.0 4z" fill="#444746"/></svg>
<svg style="left:1213.5px;top:206.5px" width="16" height="15.5" viewBox="0 0 16 15.500"><path d="M5 1.800H16M5 7.750H16M5 13.700H16" stroke="#444746" stroke-width="1.600"/><circle cx="1.400" cy="1.800" r="1.400" fill="#444746"/><circle cx="1.400" cy="7.750" r="1.400" fill="#444746"/><circle cx="1.400" cy="13.700" r="1.400" fill="#444746"/></svg>
<svg style="left:1240.0px;top:212.0px" width="8" height="4" viewBox="0 0 8 4"><path d="M0 0H8L4.0 4z" fill="#444746"/></svg>
<svg style="left:1260.5px;top:206px" width="16.5" height="16.5" viewBox="0 0 16.500 16.500"><path d="M5.500 2.300H16.500M5.500 8.250H16.500M5.500 14.200H16.500" stroke="#444746" stroke-width="1.600"/><path d="M0.500 1H1.700V4.200M0.300 6.700H2.600L0.300 9.700H2.800M0.300 12.200H2.600V16H0.300M1 14.100H2.600" fill="none" stroke="#444746" stroke-width="0.900"/></svg>
<svg style="left:1287.5px;top:212.0px" width="8" height="4" viewBox="0 0 8 4"><path d="M0 0H8L4.0 4z" fill="#444746"/></svg>
<svg style="left:1308.5px;top:206.5px" width="16.5" height="15.5" viewBox="0 0 16.500 15.500"><path d="M0 0.800H16.500M7 5.400H16.500M7 10H16.500M0 14.600H16.500" stroke="#444746" stroke-width="1.600"/><path d="M4 4.700V10.700L0.500 7.700z" fill="#444746"/></svg>
<svg style="left:1343px;top:206.5px" width="16.5" height="15.5" viewBox="0 0 16.500 15.500"><path d="M0 0.800H16.500M7 5.400H16.500M7 10H16.500M0 14.600H16.500" stroke="#444746" stroke-width="1.600"/><path d="M0.500 4.700V10.700L4 7.700z" fill="#444746"/></svg>
<svg style="left:1379px;top:206px" width="16.5" height="16.5" viewBox="0 0 16.500 16.500"><path d="M3.500 2.300H16M9.800 2.300L7.200 12.500" fill="none" stroke="#444746" stroke-width="1.700"/><path d="M0.800 0.800L15.800 15.800" stroke="#444746" stroke-width="1.600"/></svg>
<svg style="left:1646.5px;top:204px" width="19" height="18.5" viewBox="0 0 19 18.500"><path d="M15.700 8.300A7.500 7.500 0 1 1 9.600 2.600" fill="none" stroke="#444746" stroke-width="1.600"/><path d="M6.300 6.300V13.700L12.200 10z" fill="#444746"/><path d="M15.200 -0.500C15.200 2.200 16.300 3.400 19 3.400 16.300 3.400 15.200 4.600 15.200 7.300 15.200 4.600 14.100 3.400 11.400 3.400 14.100 3.400 15.200 2.200 15.200 -0.500z" fill="#444746"/></svg>
<div class="a" style="left:1674.500px;top:198px;width:165px;height:32.500px;border-radius:16.250px;background:#ecf0f7"></div>
<svg style="left:1691px;top:205.5px" width="16" height="16" viewBox="0 0 16 16"><path d="M1 15L1.800 11.200 11.600 1.400A1.300 1.300 0 0 1 13.400 1.400L14.600 2.600A1.300 1.300 0 0 1 14.600 4.400L4.800 14.200z" fill="none" stroke="#444746" stroke-width="1.600" stroke-linejoin="round"/></svg>
<span class="t" style="left:1720.50px;top:203.89px;font-size:15.6px;line-height:20px;color:#444746;letter-spacing:0.267px;">Editing</span>
<svg style="left:1813.0px;top:212.0px" width="8" height="4" viewBox="0 0 8 4"><path d="M0 0H8L4.0 4z" fill="#444746"/></svg>
<div class="a" style="left:1849.0px;top:203px;width:1px;height:21.5px;background:#c7c7c7"></div>
<svg style="left:1865px;top:210.8px" width="12" height="7" viewBox="0 0 12 7"><path d="M0.700 6.500L6 1.200 11.300 6.500" fill="none" stroke="#444746" stroke-width="1.800"/></svg>
<div class="a" style="left:17px;top:262px;width:1885px;height:1px;background:#b9bcbb"></div>
<div class="a" style="left:17px;top:262px;width:1px;height:770px;background:#b9bcbb"></div>
<svg style="left:46px;top:285px" width="17" height="17" viewBox="0 0 17 17"><path d="M16.500 8.500H1.800M8.500 1.200L1.200 8.500 8.500 15.800" fill="none" stroke="#444746" stroke-width="1.900"/></svg>
<span class="t" style="left:49.00px;top:339.90px;font-size:15.3px;line-height:20px;color:#3c4654;letter-spacing:0.691px;-webkit-text-stroke:0.250px #3c4654;">Document tabs</span>
<svg style="left:272.500px;top:344.500px" width="11" height="11" viewBox="0 0 11 11"><path d="M5.500 0V11M0 5.500H11" stroke="#444746" stroke-width="1.400"/></svg>
<div class="a" style="left:90px;top:378px;width:210px;height:8px;overflow:hidden"><span class="t" style="left:13.30px;top:-11.30px;font-size:15.3px;line-height:20px;color:#444746;letter-spacing:-0.028px;">6.1 Foundations &amp; Guar...</span></div>
<div class="a" style="left:35px;top:377px;width:274px;height:1px;background:#c7c9c8"></div>
<div class="a" style="left:65px;top:378px;width:2px;height:654px;background:#e0e2e2"></div>
<span class="t" style="left:103.30px;top:407.20px;font-size:15.3px;line-height:20px;color:#444746;letter-spacing:-0.087px;">6.2 Renewal Reminders ...</span>
<span class="t" style="left:116.70px;top:446.03px;font-size:15.3px;line-height:20px;color:#444746;letter-spacing:0.229px;">Eligibility Segments</span>
<span class="t" style="left:116.70px;top:485.66px;font-size:15.3px;line-height:20px;color:#444746;letter-spacing:0.226px;">Cadence</span>
<span class="t" style="left:116.70px;top:525.29px;font-size:15.3px;line-height:20px;color:#444746;letter-spacing:0.334px;">Grace-period logic (4...</span>
<span class="t" style="left:116.70px;top:564.92px;font-size:15.3px;line-height:20px;color:#444746;letter-spacing:0.277px;">Automation Design</span>
<span class="t" style="left:103.30px;top:604.55px;font-size:15.3px;line-height:20px;color:#444746;letter-spacing:-0.014px;">6.3 Stage Transitions (Y...</span>
<span class="t" style="left:116.70px;top:644.18px;font-size:15.3px;line-height:20px;color:#444746;letter-spacing:0.282px;">Data &amp; Logic</span>
<span class="t" style="left:116.70px;top:683.81px;font-size:15.3px;line-height:20px;color:#444746;letter-spacing:0.355px;">Batch Job (nightly)</span>
<span class="t" style="left:116.70px;top:723.44px;font-size:15.3px;line-height:20px;color:#444746;letter-spacing:0.514px;">Notifications</span>
<span class="t" style="left:103.30px;top:763.07px;font-size:15.3px;line-height:20px;color:#2a5abb;letter-spacing:-0.009px;">6.4 Economic Relief (Re...</span>
<span class="t" style="left:116.70px;top:802.70px;font-size:15.3px;line-height:20px;color:#444746;letter-spacing:0.338px;">Creation</span>
<span class="t" style="left:116.70px;top:842.33px;font-size:15.3px;line-height:20px;color:#444746;letter-spacing:0.146px;">Decision</span>
<span class="t" style="left:103.30px;top:881.96px;font-size:15.3px;line-height:20px;color:#444746;letter-spacing:0.204px;">6.6 Arrears Follow-up (...</span>
<span class="t" style="left:116.70px;top:921.59px;font-size:15.3px;line-height:20px;color:#444746;letter-spacing:0.226px;">Cadence</span>
<span class="t" style="left:116.70px;top:961.22px;font-size:15.3px;line-height:20px;color:#444746;letter-spacing:0.104px;">Sensitivity Rules</span>
<span class="t" style="left:103.30px;top:1000.85px;font-size:15.3px;line-height:20px;color:#444746;letter-spacing:-0.030px;">6.7 Email Template Inve...</span>
<div class="a" style="left:65px;top:764px;width:2px;height:17px;background:#1d3f8f"></div>
<svg style="left:0;top:0" width="1920" height="270" viewBox="0 0 1920 270"><path d="M490.5 257V260.5M503.5 257.5V261M516.5 257.5V261M529.5 257.5V261M543.5 253V261M556.5 257.5V261M569.5 257.5V261M582.5 257.5V261M595.5 257V260.5M608.5 257.5V261M622.5 257.5V261M635.5 257.5V261M648.5 253V261M661.5 257.5V261M674.5 257.5V261M688.5 257.5V261M701.5 257V260.5M714.5 257.5V261M727.5 257.5V261M740.5 257.5V261M754.5 253V261M767.5 257.5V261M780.5 257.5V261M793.5 257.5V261M806.5 257V260.5M820.5 257.5V261M833.5 257.5V261M846.5 257.5V261M859.5 253V261M872.5 257.5V261M886.5 257.5V261M899.5 257.5V261M912.5 257V260.5M925.5 257.5V261M938.5 257.5V261M952.5 257.5V261M965.5 253V261M978.5 257.5V261M991.5 257.5V261M1004.5 257.5V261M1018.5 257V260.5M1031.5 257.5V261M1044.5 257.5V261M1057.5 257.5V261M1070.5 253V261M1084.5 257.5V261M1097.5 257.5V261M1110.5 257.5V261M1123.5 257V260.5M1136.5 257.5V261M1149.5 257.5V261M1163.5 257.5V261M1176.5 253V261M1189.5 257.5V261M1202.5 257.5V261M1215.5 257.5V261M1229.5 257V260.5M1242.5 257.5V261M1255.5 257.5V261M1268.5 257.5V261M1281.5 253V261M1295.5 257.5V261M1308.5 257.5V261M1321.5 257.5V261M1334.5 257V260.5M1347.5 257.5V261M1361.5 257.5V261M1374.5 257.5V261M1387.5 253V261" stroke="#6b6f72" stroke-width="1" fill="none"/></svg>
<span class="t" style="left:486.58px;top:243.86px;font-size:10.5px;line-height:14px;color:#444746;">1</span>
<span class="t" style="left:698.08px;top:243.86px;font-size:10.5px;line-height:14px;color:#444746;">1</span>
<span class="t" style="left:804.08px;top:243.86px;font-size:10.5px;line-height:14px;color:#444746;">2</span>
<span class="t" style="left:909.58px;top:243.86px;font-size:10.5px;line-height:14px;color:#444746;">3</span>
<span class="t" style="left:1015.58px;top:243.86px;font-size:10.5px;line-height:14px;color:#444746;">4</span>
<span class="t" style="left:1121.08px;top:243.86px;font-size:10.5px;line-height:14px;color:#444746;">5</span>
<span class="t" style="left:1227.08px;top:243.86px;font-size:10.5px;line-height:14px;color:#444746;">6</span>
<span class="t" style="left:1332.08px;top:243.86px;font-size:10.5px;line-height:14px;color:#444746;">7</span>
<div class="a" style="left:595px;top:261.500px;width:686px;height:1.500px;background:#5f6368"></div>
<svg style="left:589px;top:247.500px" width="13.500" height="13" viewBox="0 0 13.500 13"><rect x="0" y="0" width="13.500" height="4" fill="#3f7de8"/><path d="M0 5.500H13.500L6.750 12.500z" fill="#3f7de8"/></svg>
<svg style="left:1275px;top:253px" width="12.500" height="6.500" viewBox="0 0 12.500 6.500"><path d="M0 0H12.500L6.250 6.500z" fill="#3f7de8"/></svg>
<div class="a" style="left:489px;top:263px;width:900px;height:769px;background:#fff;border-left:1px solid #b9bcbb;border-right:1px solid #b9bcbb"></div>
<span class="t" style="left:595.50px;top:316.55px;font-size:24.97px;line-height:32px;color:#000;font-weight:700;">6.4 Economic Relief (Requests, Decisions, Follow-ups)</span>
<span class="t" style="left:595.50px;top:350.35px;font-size:24.97px;line-height:32px;color:#000;font-weight:700;">(OS)</span>
<span class="t" style="left:595.50px;top:400.51px;font-size:16.12px;line-height:21px;color:#000;font-weight:700;">Objective:</span><span class="t" style="left:673.44px;top:400.51px;font-size:16.12px;line-height:21px;color:#000;"> Notify members and Secretariat across the relief lifecycle; prevent conflicting</span>
<span class="t" style="left:595.50px;top:422.51px;font-size:16.12px;line-height:21px;color:#000;">renewal while pending.</span>
<span class="t" style="left:621.70px;top:463.70px;font-size:19.06px;line-height:25px;color:#000;font-weight:700;">Creation</span>
<div class="a" style="left:623.5px;top:515.0px;width:7px;height:7px;border-radius:50%;background:#000"></div>
<span class="t" style="left:648.50px;top:506.51px;font-size:16.12px;line-height:21px;color:#000;">When </span><span class="t" style="left:695.09px;top:506.51px;font-size:16.12px;line-height:21px;color:#000;font-weight:700;">Economic<span style="-webkit-text-stroke:.800px #000">_</span>Relief<span style="-webkit-text-stroke:.800px #000">__</span>c</span><span class="t" style="left:851.88px;top:506.51px;font-size:16.12px;line-height:21px;color:#000;"> is created (portal or admin):</span>
<div class="a" style="left:675.9px;top:557.6999999999999px;width:7.200px;height:7.200px;border-radius:50%;border:1.100px solid #000"></div>
<span class="t" style="left:701.50px;top:549.71px;font-size:16.12px;line-height:21px;color:#000;">Email to member: “Relief Request Received – {{HijriYear}}” with expected SLA</span>
<span class="t" style="left:701.50px;top:571.21px;font-size:16.12px;line-height:21px;color:#000;">and required evidence list.</span>
<div class="a" style="left:675.9px;top:621.5px;width:7.200px;height:7.200px;border-radius:50%;border:1.100px solid #000"></div>
<span class="t" style="left:701.50px;top:613.51px;font-size:16.12px;line-height:21px;color:#000;">Notify Secretariat queue (email + task).</span>
<div class="a" style="left:675.9px;top:664.6999999999999px;width:7.200px;height:7.200px;border-radius:50%;border:1.100px solid #000"></div>
<span class="t" style="left:701.50px;top:656.71px;font-size:16.12px;line-height:21px;color:#000;">Set </span><span class="t" style="left:730.17px;top:656.71px;font-size:16.12px;line-height:21px;color:#000;font-weight:700;">Dunning Suppressed</span><span class="t" style="left:892.28px;top:656.71px;font-size:16.12px;line-height:21px;color:#000;"> flag on related </span><span class="t" style="left:1003.41px;top:656.71px;font-size:16.12px;line-height:21px;color:#000;font-weight:700;">Membership<span style="-webkit-text-stroke:.800px #000">_</span>Payment<span style="-webkit-text-stroke:.800px #000">__</span>c</span><span class="t" style="left:1201.41px;top:656.71px;font-size:16.12px;line-height:21px;color:#000;"> while</span>
<span class="t" style="left:701.50px;top:681.82px;font-size:16.05px;line-height:21px;color:#188038;font-family:'Liberation Mono',monospace;">Status__c IN (Pending, Under Review)</span><span class="t" style="left:1048.18px;top:680.51px;font-size:16.12px;line-height:21px;color:#000;">.</span>
<span class="t" style="left:621.70px;top:743.50px;font-size:19.06px;line-height:25px;color:#000;font-weight:700;">Decision</span>
<div class="a" style="left:623.5px;top:797.2px;width:7px;height:7px;border-radius:50%;background:#000"></div>
<span class="t" style="left:648.50px;top:788.71px;font-size:16.12px;line-height:21px;color:#000;">On </span><span class="t" style="left:674.48px;top:790.02px;font-size:16.05px;line-height:21px;color:#188038;font-family:'Liberation Mono',monospace;">Status__c = Approved</span><span class="t" style="left:867.08px;top:788.71px;font-size:16.12px;line-height:21px;color:#000;">:</span>
<div class="a" style="left:675.9px;top:840.6999999999999px;width:7.200px;height:7.200px;border-radius:50%;border:1.100px solid #000"></div>
<span class="t" style="left:701.50px;top:832.71px;font-size:16.12px;line-height:21px;color:#000;">Email to members with </span><span class="t" style="left:869.01px;top:832.71px;font-size:16.12px;line-height:21px;color:#000;font-weight:700;">Approved<span style="-webkit-text-stroke:.800px #000">_</span>Relief<span style="-webkit-text-stroke:.800px #000">_</span>Amount<span style="-webkit-text-stroke:.800px #000">__</span>c</span><span class="t" style="left:1093.85px;top:832.71px;font-size:16.12px;line-height:21px;color:#000;">,</span>
<span class="t" style="left:701.50px;top:854.31px;font-size:16.12px;line-height:21px;color:#000;font-weight:700;">Member<span style="-webkit-text-stroke:.800px #000">_</span>Contribution<span style="-webkit-text-stroke:.800px #000">_</span>Expected<span style="-webkit-text-stroke:.800px #000">__</span>c</span><span class="t" style="left:976.50px;top:854.31px;font-size:16.12px;line-height:21px;color:#000;">, and quick-pay link.</span>
<div class="a" style="left:675.9px;top:904.6999999999999px;width:7.200px;height:7.200px;border-radius:50%;border:1.100px solid #000"></div>
<span class="t" style="left:701.50px;top:896.71px;font-size:16.12px;line-height:21px;color:#000;">Clear Dunning Suppressed; start </span><span class="t" style="left:939.85px;top:896.71px;font-size:16.12px;line-height:21px;color:#000;font-weight:700;">gentle nudges</span><span class="t" style="left:1049.11px;top:896.71px;font-size:16.12px;line-height:21px;color:#000;"> every 14 days until contribution</span>
<span class="t" style="left:701.50px;top:918.31px;font-size:16.12px;line-height:21px;color:#000;">is paid or installment started. Status: Cancelled based on not paid</span>
<div class="a" style="left:623.5px;top:971.2px;width:7px;height:7px;border-radius:50%;background:#000"></div>
<span class="t" style="left:648.50px;top:962.71px;font-size:16.12px;line-height:21px;color:#000;">On </span><span class="t" style="left:674.48px;top:964.02px;font-size:16.05px;line-height:21px;color:#188038;font-family:'Liberation Mono',monospace;">Status__c = Rejected</span><span class="t" style="left:867.08px;top:962.71px;font-size:16.12px;line-height:21px;color:#000;">:</span>
<div class="a" style="left:675.9px;top:1014.6999999999999px;width:7.200px;height:7.200px;border-radius:50%;border:1.100px solid #000"></div>
<span class="t" style="left:701.50px;top:1006.71px;font-size:16.12px;line-height:21px;color:#000;">Email with reason and next steps (installments link).</span>
<svg style="left:877.700px;top:499px" width="8" height="17" viewBox="0 0 8 17"><path d="M0.500 0.500H3Q4 0.500 4 1.500 4 0.500 5 0.500H7.500M0.500 16.500H3Q4 16.500 4 15.500 4 16.500 5 16.500H7.500M4 1.500V15.500" fill="none" stroke="#222" stroke-width="1"/></svg>
<div class="a" style="left:1907px;top:610px;width:9px;height:48px;border-radius:4.500px;background:#d7dbde"></div>
<div class="a" style="left:1893.700px;top:979px;width:44px;height:44px;border-radius:22px;background:#fff;box-shadow:0 1px 3px rgba(60,64,67,.35),0 2px 6px rgba(60,64,67,.18)"></div>
<svg style="left:1905.500px;top:995.500px" width="7" height="11" viewBox="0 0 7 11"><path d="M6.200 0.700L1.300 5.500 6.200 10.300" fill="none" stroke="#444746" stroke-width="1.600"/></svg>
<div class="a" style="left:0;top:1032px;width:1920px;height:48px;background:#1d1d1d"></div>
<div class="a" style="left:21px;top:1045px;width:20px;height:20px;border-radius:50%;background:linear-gradient(135deg,#ffd21a 15%,#f9a000 50%,#e85a00 90%)"></div>
<span class="t" style="left:51.00px;top:1039.54px;font-size:12px;line-height:16px;color:#fff;font-weight:700;letter-spacing:-0.759px;">78°F</span>
<span class="t" style="left:51.00px;top:1055.84px;font-size:12px;line-height:16px;color:#cfcfcf;letter-spacing:-0.306px;">Sunny</span>
<div class="a" style="left:506.8px;top:1045.3px;width:11.200px;height:10.800px;background:linear-gradient(135deg,#7cd6ff,#1f9be8)"></div>
<div class="a" style="left:519.1px;top:1045.3px;width:11.200px;height:10.800px;background:linear-gradient(135deg,#7cd6ff,#1f9be8)"></div>
<div class="a" style="left:506.8px;top:1057.1px;width:11.200px;height:10.800px;background:linear-gradient(135deg,#7cd6ff,#1f9be8)"></div>
<div class="a" style="left:519.1px;top:1057.1px;width:11.200px;height:10.800px;background:linear-gradient(135deg,#7cd6ff,#1f9be8)"></div>
<div class="a" style="left:543px;top:1040px;width:220px;height:32px;border-radius:16px;background:#383838;border:1px solid #4d4d4d"></div>
<svg style="left:555px;top:1049.5px" width="15" height="15" viewBox="0 0 15 15"><circle cx="6.200" cy="6.200" r="5" fill="none" stroke="#f0f0f0" stroke-width="1.500"/><path d="M9.900 9.900L14 14" stroke="#f0f0f0" stroke-width="1.700"/></svg>
<span class="t" style="left:580.50px;top:1047.15px;font-size:14px;line-height:18px;color:#dedede;letter-spacing:-0.772px;">Search</span>
<svg style="left:712px;top:1040px" width="46" height="32" viewBox="0 0 46 32"><circle cx="22" cy="14.300" r="10.900" fill="#f3c66f"/><circle cx="17.500" cy="10" r="1.900" fill="#e0a850"/><circle cx="25.500" cy="8.500" r="1.300" fill="#e0a850"/><circle cx="26" cy="15.500" r="2" fill="#e0a850"/><circle cx="18.500" cy="18.500" r="1.500" fill="#dd8f52"/><path d="M1 28L3 21.500 4.500 25 6.500 18.500 8.500 25 10 21.500 12 26 13.500 23 15 28zM30 28L31.500 23 33 26 35 19 37 25 38.500 21 40.500 26 42 23 44.500 28z" fill="#3f57b5"/><path d="M1.500 29.500Q20 22.500 44 27.500 22 26.500 6 31z" fill="#e4ebf9"/><path d="M10 30.500Q26 26 44 27.500 30 28 18 31z" fill="#5f78cf"/></svg>
<div class="a" style="left:775px;top:1050.500px;width:17.500px;height:16px;border-radius:2px;background:#6f6f6f"></div>
<div class="a" style="left:782px;top:1044.500px;width:17px;height:15.500px;border-radius:2px;background:#f2f2f2;box-shadow:-1px 1px 0 #555"></div>
<svg style="left:818.5px;top:1043.8px" width="24" height="25" viewBox="0 0 24 25"><linearGradient id="tg" x1="0.200" y1="0" x2="0.800" y2="1"><stop offset="0" stop-color="#8e84d8"/><stop offset="1" stop-color="#5058c4"/></linearGradient><path d="M12 1A11 11 0 1 1 6 21.300L1 24 2.600 18A11 11 0 0 1 12 1z" fill="url(#tg)"/><rect x="5.500" y="8" width="9" height="8" rx="1.500" fill="#fff"/><path d="M15 11L19 8.500V15.500L15 13z" fill="#fff"/></svg>
<svg style="left:862px;top:1044.5px" width="26" height="22.3" viewBox="0 0 26 22"><path d="M1 2.500A1.500 1.500 0 0 1 2.500 1H9L11.500 3.500H24.500A1.500 1.500 0 0 1 26 5V8H1z" fill="#e8a317"/><rect x="1" y="5.500" width="25" height="16" rx="1.500" fill="#fcd354"/><rect x="7.500" y="14" width="12" height="7.500" rx="1" fill="#2f8fe6"/><rect x="10" y="16.500" width="7" height="2" fill="#7ec2f5"/></svg>
<div class="a" style="left:872.0px;top:1071.500px;width:6px;height:3px;border-radius:1.500px;background:#8a8a8a"></div>
<svg style="left:906.8px;top:1043.7px" width="24.4" height="24.4" viewBox="0 0 24 24"><linearGradient id="eg" x1="0.950" y1="0.100" x2="0.150" y2="0.900"><stop offset="0" stop-color="#5bd86a"/><stop offset="0.300" stop-color="#2fc3b2"/><stop offset="0.550" stop-color="#1e92e4"/><stop offset="1" stop-color="#1763c0"/></linearGradient><circle cx="12" cy="12" r="12" fill="url(#eg)"/><path d="M2.500 9.500C1 16 6.500 23.500 14.500 23.700 18.500 23.700 21.300 21.500 22.500 19.300 18 21.300 12.800 19.800 10.800 15.800 9.600 13 10.500 10.300 12.800 8.800 8.500 7.300 4 7.500 2.500 9.500z" fill="#0f4f9f"/><path d="M24.600 11.800C24.800 16 21.800 18.600 17.600 18.600 14 18.600 12 16.600 12.600 14.600 13.100 13 14.800 12.700 16.200 13.100 19.500 14 23.200 13.800 24.600 11.800z" fill="#1d1d1d"/></svg>
<svg style="left:950.5px;top:1043px" width="25" height="26" viewBox="0 0 25 26"><linearGradient id="fg" x1="0.850" y1="0.100" x2="0.200" y2="0.950"><stop offset="0" stop-color="#ffe23d"/><stop offset="0.350" stop-color="#ff9a1a"/><stop offset="0.700" stop-color="#ff4a3d"/><stop offset="1" stop-color="#e8209c"/></linearGradient><circle cx="12.300" cy="14" r="11.500" fill="url(#fg)"/><path d="M13.500 0.500C15 3.500 19 4.500 21.500 8.500 23 11 23.500 13 23.500 14.500L19 9C17 6 14 4.500 13.500 0.500z" fill="#ffd83a"/><path d="M2.500 6.500C3 8 4 8.800 5.500 9L3 12z" fill="#ff8a1a"/><circle cx="11.800" cy="13.500" r="5.300" fill="#7a42e6"/><path d="M5.800 11.500C7.500 8.500 11 8 13.300 9.200 11.800 9.700 11.300 11 12.300 12.200 9.800 11.500 7.800 12.500 5.800 11.500z" fill="#ff9c1a"/></svg>
<div class="a" style="left:1075.500px;top:1036.500px;width:38.500px;height:39.500px;border-radius:5px;background:#2f2f2f;border:1px solid #3c3c3c"></div>
<svg style="left:994.4px;top:1044.3px" width="24" height="24" viewBox="-12 -12 24 24"><circle r="12" fill="#fbc116"/><path d="M0 0L-10.390 -6A12 12 0 0 1 10.390 -6z" fill="#e33b2e"/><path d="M0 0L-10.390 -6A12 12 0 0 0 0 12L5.200 3z" fill="#2da94f"/><path d="M-10.390 -6A12 12 0 0 1 10.390 -6H0z" fill="#e33b2e"/><circle r="5.600" fill="#fff"/><circle r="4.400" fill="#3f83f0"/></svg>
<svg style="left:1038.7px;top:1044.3px" width="24" height="24" viewBox="-12 -12 24 24"><circle r="12" fill="#fbc116"/><path d="M0 0L-10.390 -6A12 12 0 0 1 10.390 -6z" fill="#e33b2e"/><path d="M0 0L-10.390 -6A12 12 0 0 0 0 12L5.200 3z" fill="#2da94f"/><path d="M-10.390 -6A12 12 0 0 1 10.390 -6H0z" fill="#e33b2e"/><circle r="5.600" fill="#fff"/><circle r="4.400" fill="#3f83f0"/></svg>
<svg style="left:1082.4px;top:1044.3px" width="24" height="24" viewBox="-12 -12 24 24"><circle r="12" fill="#fbc116"/><path d="M0 0L-10.390 -6A12 12 0 0 1 10.390 -6z" fill="#e33b2e"/><path d="M0 0L-10.390 -6A12 12 0 0 0 0 12L5.200 3z" fill="#2da94f"/><path d="M-10.390 -6A12 12 0 0 1 10.390 -6H0z" fill="#e33b2e"/><circle r="5.600" fill="#fff"/><circle r="4.400" fill="#3f83f0"/></svg>
<div class="a" style="left:1008px;top:1039px;width:16px;height:16px;border-radius:50%;background:radial-gradient(circle at 50% 42%,#7a5a48 0 30%,transparent 31%),radial-gradient(ellipse at 50% 110%,#e9e9e9 0 48%,transparent 49%),#f4f4f4;border:.500px solid #ddd"></div>
<div class="a" style="left:1012.500px;top:1041px;width:7px;height:4px;border-radius:3px 3px 0 0;background:#1e1815"></div>
<div class="a" style="left:1054.500px;top:1041.500px;width:10px;height:10px;border-radius:2.500px;background:#2a2a2a;border:1.500px solid #161616;box-shadow:0 0 0 .6px #777;transform:rotate(20deg)"></div>
<div class="a" style="left:1095px;top:1038.500px;width:17px;height:17px;border-radius:50%;background:#d81b60"></div>
<span class="t" style="left:1100.30px;top:1041.04px;font-size:10px;line-height:13px;color:#fff;">S</span>
<div class="a" style="left:1004.0px;top:1071.500px;width:6px;height:3px;border-radius:1.500px;background:#8a8a8a"></div>
<div class="a" style="left:1086.8px;top:1071.500px;width:16px;height:3px;border-radius:1.500px;background:#60cdff"></div>
<svg style="left:1127px;top:1047px" width="24.5" height="17.5" viewBox="0 0 24.500 17.500"><rect x="0.500" y="0.500" width="23.500" height="16.500" fill="#eaf3fa" stroke="#aab8c2"/><path d="M1.500 13L4 11 5.500 12 7.500 5.500 9 9 11 10.500 13 9.500 15 11 17.500 4.500 19 9.500 21 11.500 23 12V16H1.500z" fill="#a9d5f2" stroke="#58a6de" stroke-width="0.800"/></svg>
<svg style="left:1171px;top:1046.5px" width="22" height="18" viewBox="0 0 22 18"><rect x="0.500" y="0.500" width="21" height="17" fill="#050505" stroke="#9a9a9a" stroke-width="0.900"/><rect x="0.500" y="0.500" width="21" height="2.200" fill="#b5b5b5"/><path d="M3 6.500H5.500M6.500 5.500V8M8 8.500H12" stroke="#e8e8e8" stroke-width="1"/></svg>
<svg style="left:1214.5px;top:1043.5px" width="25" height="26" viewBox="0 0 25 26"><path d="M12 1C5 1 1.500 5 2 10 2.500 14.500 4.500 17.500 7.500 17.800 9 17.800 10 16.500 10.500 15L11 19.500C11.200 23.500 13 25.500 15.500 25 17.800 24.500 17.500 22 17.500 19V15.800C21 15 23.500 11.500 23.500 7.500 23.500 3 18.500 1 12 1z" fill="#41719f" stroke="#dfe8f1" stroke-width="0.900"/><path d="M8.500 3.500C6 6 6 11.500 8.500 14.500M16.500 3.500C19.500 6 19.500 10.500 17.500 13.500M12.300 5V15" fill="none" stroke="#dfe8f1" stroke-width="0.900"/><circle cx="15" cy="8" r="0.900" fill="#fff"/></svg>
<svg style="left:1258.5px;top:1044.5px" width="24" height="24" viewBox="0 0 24 24"><path d="M17.500 0.500L23.500 3.300V20.700L17.500 23.500 6.500 13.500 2.300 16.800 0.500 15.800V8.200L2.300 7.200 6.500 10.500z" fill="#2aa7f0"/><path d="M17.500 0.500L23.500 3.300V20.700L17.500 23.500z" fill="#1a7fcb"/><path d="M17.500 7V17L10.500 12z" fill="#1d1d1d"/></svg>
<div class="a" style="left:1268.0px;top:1071.500px;width:6px;height:3px;border-radius:1.500px;background:#8a8a8a"></div>
<svg style="left:1301.5px;top:1044px" width="25" height="25" viewBox="0 0 25 25"><path d="M0 3L12 0 25 7 22 25H3z" fill="#21d789"/><path d="M14 0L25 7 22 25 12 14z" fill="#fcf84a"/><path d="M0 3L9 1 6 12 0 14z" fill="#07c3f2"/><rect x="4" y="4" width="17" height="17" fill="#000"/></svg>
<span class="t" style="left:1307.50px;top:1049.05px;font-size:8.5px;line-height:11px;color:#fff;font-weight:700;">PC</span>
<div class="a" style="left:1307.500px;top:1060.500px;width:6px;height:1.300px;background:#fff"></div>
<svg style="left:1345.5px;top:1043.5px" width="26" height="26" viewBox="0 0 26 26"><g transform="rotate(45 13 13)"><rect x="4.500" y="4.500" width="8" height="8" rx="1" fill="#e8574a"/><rect x="13.500" y="4.500" width="8" height="8" rx="1" fill="#5ec26a"/><rect x="4.500" y="13.500" width="8" height="8" rx="1" fill="#5a9be8"/><rect x="13.500" y="13.500" width="8" height="8" rx="1" fill="#f0c53a"/></g><path d="M10 7L16 19M16 12L12 16" stroke="#222" stroke-width="1.300"/><circle cx="10" cy="7" r="1.700" fill="#222"/><circle cx="16" cy="19" r="1.700" fill="#222"/><circle cx="16.500" cy="11.500" r="1.700" fill="#222"/></svg>
<div class="a" style="left:1391.300px;top:1043.800px;width:24px;height:24.200px;background:#fdfdfd"></div>
<svg style="left:1396px;top:1047px" width="15" height="13" viewBox="0 0 15 13"><rect x="0.600" y="0.600" width="13.800" height="8.800" rx="1" fill="#dff0fa" stroke="#2b7fc0" stroke-width="1.200"/><path d="M5 12.500H10M7.500 9.500V12.500" stroke="#2b7fc0" stroke-width="1.200"/><path d="M3.500 5L5.500 7 8.500 3" fill="none" stroke="#35a853" stroke-width="1.200"/></svg>
<span class="t" style="left:1395.50px;top:1061.48px;font-size:3.8px;line-height:5px;color:#666;">TaskPro</span>
<div class="a" style="left:1400.0px;top:1071.500px;width:6px;height:3px;border-radius:1.500px;background:#8a8a8a"></div>
<svg style="left:1671px;top:1052px" width="12" height="8" viewBox="0 0 12 8"><path d="M1 7L6 2 11 7" fill="none" stroke="#f3f3f3" stroke-width="1.400"/></svg>
<svg style="left:1700px;top:1050px" width="18" height="12" viewBox="0 0 18 12"><path d="M4.500 11.500A4 4 0 0 1 4 3.600 5.300 5.300 0 0 1 14 4.600 3.500 3.500 0 0 1 14 11.500z" fill="#d9d9d9"/><path d="M4 10Q9 3 14.500 5.500" stroke="#9a9a9a" stroke-width="1.300" fill="none"/></svg>
<svg style="left:1732.5px;top:1050px" width="17" height="11.5" viewBox="0 0 17 11.500"><rect x="0.600" y="0.600" width="15.800" height="10.300" rx="1.500" fill="none" stroke="#f3f3f3" stroke-width="1.100"/><path d="M3 3.500H4.500M6 3.500H7.500M9 3.500H10.500M12 3.500H13.500M3 5.800H4.500M6 5.800H7.500M9 5.800H10.500M12 5.800H13.500M4.500 8.300H12.500" stroke="#f3f3f3" stroke-width="1.100"/></svg>
<svg style="left:1764px;top:1049px" width="18" height="14" viewBox="0 0 18 14"><path d="M1 5A11.500 11.500 0 0 1 17 5M3.500 7.800A8 8 0 0 1 14.500 7.800M6 10.500A4.500 4.500 0 0 1 12 10.500" fill="none" stroke="#f3f3f3" stroke-width="1.400"/><circle cx="9" cy="12.300" r="1.300" fill="#f3f3f3"/></svg>
<svg style="left:1788.5px;top:1049px" width="17" height="14" viewBox="0 0 17 14"><path d="M1 5H3.500L7 1.800V12.200L3.500 9H1z" fill="none" stroke="#f3f3f3" stroke-width="1.200" stroke-linejoin="round"/><path d="M9.500 4.500A3.500 3.500 0 0 1 9.500 9.500M11.500 2.500A6.300 6.300 0 0 1 11.500 11.500M13.600 0.800A9 9 0 0 1 13.600 13.200" fill="none" stroke="#f3f3f3" stroke-width="1.200"/></svg>
<span class="t" style="left:1833.50px;top:1040.14px;font-size:12px;line-height:16px;color:#fff;letter-spacing:-0.282px;">1:49 PM</span>
<span class="t" style="left:1822.00px;top:1055.84px;font-size:12px;line-height:16px;color:#fff;letter-spacing:0.139px;">12/4/2025</span>
<svg style="left:1885px;top:1048px" width="14" height="17" viewBox="0 0 14 17"><path d="M7 0.500A5 5 0 0 1 12 5.500V10L13.500 12.500H0.500L2 10V5.500A5 5 0 0 1 7 0.500z" fill="#86dcfa"/><path d="M4.800 14H9.200A2.200 2.200 0 0 1 4.800 14z" fill="#86dcfa"/></svg>
</body></html>
